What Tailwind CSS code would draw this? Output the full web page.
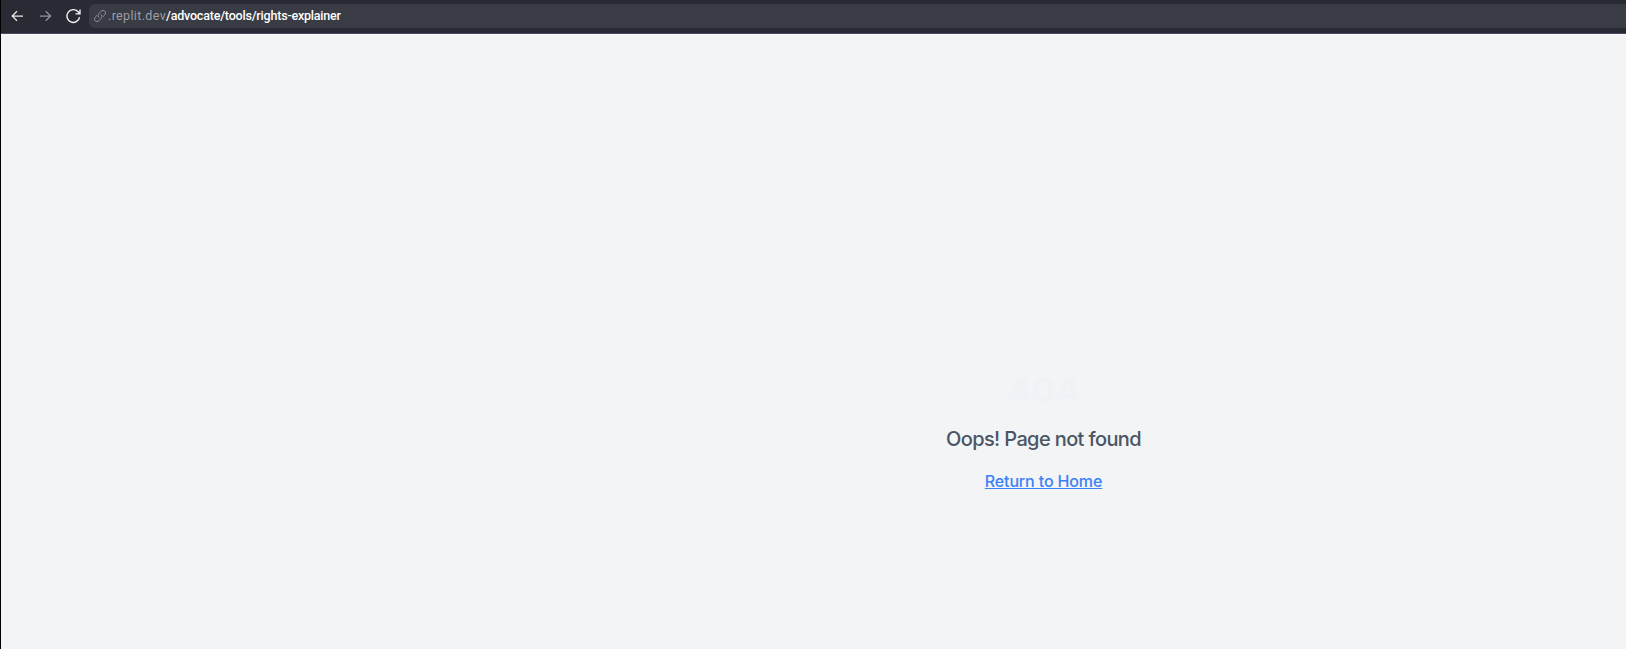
<!DOCTYPE html>
<html lang="en">
<head>
<meta charset="utf-8">
<title>Page not found</title>
<script src="https://cdn.jsdelivr.net/npm/@tailwindcss/browser@4"></script>
</head>
<body class="h-screen overflow-hidden bg-[#f3f4f6] font-['Inter',sans-serif]">
<div class="flex h-screen flex-col border-l border-black">
  <header class="flex h-[34px] shrink-0 items-start border-b border-[#4a4862] bg-[#282b34] pt-1">
    <div class="flex h-6 w-22 shrink-0 items-center pl-2">
      <svg class="mr-3 size-4 text-[#e8e9eb]" viewBox="0 0 16 16" fill="none" stroke="currentColor" stroke-width="1.25"><path d="M14 8H3.5M8 3.2 3.2 8 8 12.8"/></svg>
      <svg class="mr-3 size-4 text-[#92949a]" viewBox="0 0 16 16" fill="none" stroke="currentColor" stroke-width="1.25"><path d="M3 8H13.5M8.8 3.2 13.6 8l-4.8 4.8"/></svg>
      <svg class="size-4 text-[#f4f4f6]" viewBox="0 0 16 16" fill="none" stroke="currentColor" stroke-width="1.35"><path d="M14.6 9.2A6.4 6.4 0 1 1 13.1 3.8L14.8 5.7M15 1.5V5.9H10.5"/></svg>
    </div>
    <div class="flex h-6 flex-1 items-center rounded-l-md bg-[#393c45] pl-1">
      <svg class="size-3.5 shrink-0 text-[#8b8d93]" viewBox="0 0 14 14" fill="none" stroke="currentColor" stroke-width="1" stroke-linecap="round"><path d="M5.9 8.4a2.6 2.6 0 0 1-.2-3.7l2.5-2.5a2.5 2.5 0 0 1 3.6 3.6L10.1 7.5M8 5.6a2.6 2.6 0 0 1 .3 3.7l-2.5 2.5a2.5 2.5 0 0 1-3.6-3.6L3.9 6.5"/></svg>
      <div class="flex whitespace-nowrap pl-px font-['Roboto',sans-serif] text-[12.5px] leading-6 text-white">
        <span class="w-[58px] tracking-[0.35px] text-[#9c9ea4]">.replit.dev</span><span class="font-medium tracking-[-0.2px]">/advocate/tools/rights-explainer</span>
      </div>
    </div>
  </header>
  <main class="flex flex-1 flex-col items-center border-t border-[#f8f7fc] pt-[335px] pl-[460px] text-center">
    <h1 class="mb-[15px] text-4xl font-bold text-[#f0f2f7]">404</h1>
    <p class="mb-4 text-xl font-[450] tracking-[-0.62px] text-gray-600">Oops! Page not found</p>
    <a href="#" class="text-base font-[450] tracking-[-0.14px] text-[#3b82f6] underline">Return to Home</a>
  </main>
</div>
</body>
</html>
